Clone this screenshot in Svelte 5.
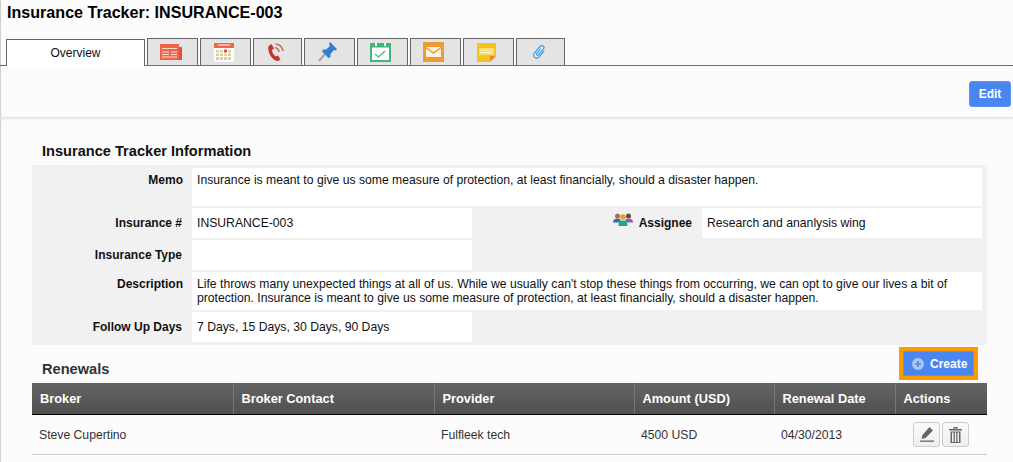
<script lang="ts">
  const tabs = ['news', 'cal', 'phone', 'pin', 'check', 'mail', 'note', 'clip'];
  const cols = [
    { label: 'Broker', width: 201 },
    { label: 'Broker Contact', width: 201 },
    { label: 'Provider', width: 200 },
    { label: 'Amount (USD)', width: 140 },
    { label: 'Renewal Date', width: 121 },
    { label: 'Actions', width: 92 }
  ];
  const renewals = [
    { broker: 'Steve Cupertino', contact: '', provider: 'Fulfleek tech', amount: '4500 USD', date: '04/30/2013' }
  ];
</script>

<div class="page">
  <h1>Insurance Tracker: INSURANCE-003</h1>

  <div class="tabs">
    <div class="tab active">Overview</div>
    {#each tabs as t}
      <div class="tab" class:narrow={t === 'phone' || t === 'clip'}>
        {#if t === 'news'}
          <svg width="22" height="16" viewBox="0 0 22 16">
            <rect x="18" y="3" width="4" height="13" fill="#d9553a" />
            <rect width="19" height="16" fill="#f0644a" />
            <path d="M2 4.500h15M2 8h7M11 8h6M2 10.500h7M11 10.500h6M2 13h15" stroke="#fbd9d0" stroke-width="1.200" />
          </svg>
        {:else if t === 'cal'}
          <svg width="20" height="19" viewBox="0 0 20 19">
            <rect width="20" height="19" fill="#fff" />
            <rect width="20" height="5" fill="#f0644a" />
            <rect x="4" y="1.500" width="12" height="1" fill="#fff" />
            <path d="M2 7h3v2.500H2zM6 7h3v2.500H6zM14 7h3v2.500h-3zM2 10.500h3V13H2zM6 10.500h3V13H6zM10 10.500h3V13h-3zM14 10.500h3V13h-3zM2 14h3v3H2zM6 14h3v3H6zM10 14h3v3h-3zM14 14h3v3h-3z" fill="#dccfa3" />
            <rect x="10" y="6.500" width="3" height="3" fill="#e8503a" />
          </svg>
        {:else if t === 'phone'}
          <svg width="17" height="18" viewBox="0 0 17 18">
            <path d="M.5 3 3.500 1 6 5.500 4 7C4 9.500 5.500 12 8 13.500L10 12.500 12.500 16.500 10 18C4.500 18-1 9.500.5 3Z" fill="#c0392b" />
            <path d="M7 4.500A5 5 0 0 1 11 9M7.500 1A8.500 8.500 0 0 1 15 8" fill="none" stroke="#c86a5c" stroke-width="1.500" />
          </svg>
        {:else if t === 'pin'}
          <svg width="20" height="20" viewBox="0 0 20 20">
            <path d="M1 19 7 12" stroke="#a5a5a5" stroke-width="2" />
            <path d="M12 0 19 7 17.500 8.500 16 8 12.500 12 12.500 15 10.500 16 4 9.500 5 7.500 8 7.500 12 4 11 2Z" fill="#2f80d0" />
          </svg>
        {:else if t === 'check'}
          <svg width="21" height="20" viewBox="0 0 21 20">
            <rect y="1" width="21" height="19" fill="#3cb878" />
            <rect x="2" y="5.500" width="17" height="12.500" fill="#fff" />
            <path d="M5 1h2v3H5zM14 1h2v3h-2z" fill="#fff" />
            <path d="M5 12 8.500 15 15 9" fill="none" stroke="#5cc08a" stroke-width="1.600" />
          </svg>
        {:else if t === 'mail'}
          <svg width="21" height="20" viewBox="0 0 21 20">
            <rect width="21" height="20" fill="#ee9b33" />
            <rect x="3" y="5" width="15" height="10" fill="#fdf3e3" />
            <path d="M3 5.500 10.500 11 18 5.500" fill="none" stroke="#ee9b33" stroke-width="1.500" />
          </svg>
        {:else if t === 'note'}
          <svg width="19" height="19" viewBox="0 0 19 19">
            <path d="M0 0H19V13L13 19H0Z" fill="#f6c21c" />
            <path d="M13 19V13H19Z" fill="#e8892c" />
            <path d="M2 5h15v7H2z" fill="#f9dc78" />
            <path d="M3 7h12M3 9.500h12" stroke="#fdf0b8" stroke-width="1" />
          </svg>
        {:else}
          <svg width="15" height="16" viewBox="0 0 16 16">
            <g transform="rotate(40 8 8)">
              <path d="M11 4V12.500a3.200 3.200 0 0 1-6.400 0V2.800a2.300 2.300 0 0 1 4.600 0V11a1.200 1.200 0 0 1-2.400 0V4.500" fill="none" stroke="#2f9cf0" stroke-width="1.200" />
            </g>
          </svg>
        {/if}
      </div>
    {/each}
  </div>

  <div class="toolbar">
    <button class="btn-edit">Edit</button>
  </div>

  <div class="content">
    <h2>Insurance Tracker Information</h2>
    <div class="form">
      <div class="lbl">Memo</div>
      <div class="val span3">Insurance is meant to give us some measure of protection, at least financially, should a disaster happen.</div>

      <div class="lbl mid">Insurance #</div>
      <div class="val mid">INSURANCE-003</div>
      <div class="lbl mid assignee">
        <svg class="people" width="20" height="13" viewBox="0 0 20 13">
          <circle cx="4.500" cy="3" r="2.500" fill="#b5703a" />
          <circle cx="15.500" cy="3" r="2.500" fill="#6a4a3a" />
          <path d="M0 9.500C0 6.500 2 5.500 4.500 5.500S8 6.500 8 9.500Z" fill="#2f6fb0" />
          <path d="M12 9.500C12 6.500 13 5.500 15.500 5.500S20 6.500 20 9.500Z" fill="#8a5fb0" />
          <circle cx="10" cy="4" r="2.800" fill="#e0a030" />
          <path d="M5.500 13C5.500 8.500 7 7.500 10 7.500S14.500 8.500 14.500 13Z" fill="#2aa58a" />
        </svg>
        <span>Assignee</span>
      </div>
      <div class="val mid">Research and ananlysis wing</div>

      <div class="lbl mid">Insurance Type</div>
      <div class="val"></div>
      <div class="gap"></div>

      <div class="lbl">Description</div>
      <div class="val span3">Life throws many unexpected things at all of us. While we usually can't stop these things from occurring, we can opt to give our lives a bit of protection. Insurance is meant to give us some measure of protection, at least financially, should a disaster happen.</div>

      <div class="lbl mid">Follow Up Days</div>
      <div class="val mid">7 Days, 15 Days, 30 Days, 90 Days</div>
      <div class="gap"></div>
    </div>

    <div class="renewals-head">
      <h2 class="sub">Renewals</h2>
      <div class="highlight">
        <button class="btn-create">
          <svg width="12" height="12" viewBox="0 0 12 12">
            <circle cx="6" cy="6" r="6" fill="#a9c6ee" />
            <path d="M6 3v6M3 6h6" stroke="#4a86e8" stroke-width="1.600" />
          </svg>
          Create
        </button>
      </div>
    </div>

    <table>
      <colgroup>
        {#each cols as c}
          <col style="width: {c.width}px" />
        {/each}
      </colgroup>
      <thead>
        <tr>
          {#each cols as c}
            <th>{c.label}</th>
          {/each}
        </tr>
      </thead>
      <tbody>
        {#each renewals as r}
          <tr>
            <td>{r.broker}</td>
            <td>{r.contact}</td>
            <td>{r.provider}</td>
            <td>{r.amount}</td>
            <td>{r.date}</td>
            <td class="actions">
              <button class="icon-btn" aria-label="Edit">
                <svg width="14" height="15" viewBox="0 0 14 15">
                  <path d="M9.500 0 13 3.500 5.500 11 1.500 12 2.500 8Z" fill="#666" />
                  <rect y="13.500" width="14" height="1.300" fill="#666" />
                </svg>
              </button>
              <button class="icon-btn" aria-label="Delete">
                <svg width="13" height="16" viewBox="0 0 13 16">
                  <path d="M0 2h13v1.500H0zM4.500 0h4v2h-1v-.8h-2V2h-1z" fill="#666" />
                  <path d="M1.500 4.500h10V16h-10zM3 5.500V15h1.500V5.500zM5.800 5.500V15h1.400V5.500zM8.500 5.500V15H10V5.500z" fill="#666" fill-rule="evenodd" />
                </svg>
              </button>
            </td>
          </tr>
        {/each}
      </tbody>
    </table>
  </div>
</div>

<style>
  :global(body) {
    margin: 0;
    background: #fcfcfc;
  }

  .page {
    min-height: 462px;
    box-sizing: border-box;
    font-family: 'Liberation Sans', Arial, sans-serif;
    font-size: 12.2px;
    color: #111;
    box-shadow: inset 2px 0 1px -1px #ccc;
    overflow: hidden;
  }

  h1 {
    margin: 0;
    padding: 3px 0 0 7px;
    height: 35px;
    box-sizing: border-box;
    font-size: 16.1px;
    line-height: 19px;
    color: #000;
  }

  .tabs {
    display: flex;
    align-items: flex-end;
    gap: 2px;
    padding: 3px 0 0 6px;
    height: 31px;
    box-sizing: border-box;
    border-bottom: 1px solid #666;
  }

  .tab {
    width: 51px;
    height: 27px;
    padding-right: 4px;
    box-sizing: border-box;
    background: #e4e4e4;
    border: 1px solid #666;
    border-bottom: none;
    display: flex;
    align-items: center;
    justify-content: center;
  }

  .tab.narrow {
    width: 49px;
    padding-right: 2px;
  }

  .tab.active {
    width: 139px;
    height: 27px;
    padding-right: 0;
    margin-bottom: -1px;
    background: #fff;
    color: #111;
    font-size: 12px;
    position: relative;
  }

  .toolbar {
    height: 52px;
    box-sizing: border-box;
    display: flex;
    justify-content: flex-end;
    align-items: flex-start;
    padding: 15px 2px 0 0;
    border-bottom: 1px solid #e4e4e4;
    box-shadow: 0 1px 2px #e6e6e6;
  }

  .btn-edit {
    width: 42px;
    height: 26px;
    padding: 0;
    background: #4a86f0;
    border: 1px solid #5b94f2;
    border-radius: 3px;
    color: #fff;
    font: bold 12px 'Liberation Sans', Arial, sans-serif;
  }

  .content {
    padding: 24px 26px 0 32px;
  }

  h2 {
    margin: 0;
    padding-left: 10px;
    font-size: 14.6px;
    line-height: 18px;
    height: 23px;
    color: #111;
  }

  .form {
    display: grid;
    grid-template-columns: 160px 280px 230px 280px;
    grid-template-rows: 38px 30px 30px 38px 30px;
    row-gap: 2px;
    padding: 3px 5px 3px 0;
    background: #f1f1f1;
  }

  .lbl {
    padding: 5px 9px 0 0;
    text-align: right;
    font-size: 12px;
    font-weight: bold;
    line-height: 14px;
  }

  .lbl.mid {
    padding-top: 8px;
    padding-right: 10px;
  }

  .lbl.assignee {
    display: flex;
    justify-content: flex-end;
    align-items: flex-start;
    gap: 6px;
  }

  .val {
    padding: 5px 5px 0;
    background: #fff;
    line-height: 14px;
  }

  .val.mid {
    padding-top: 8px;
  }

  .span3 {
    grid-column: span 3;
  }

  .gap {
    grid-column: span 2;
  }

  .people {
    margin-top: -3px;
  }

  .renewals-head {
    display: flex;
    justify-content: space-between;
    height: 38px;
    padding-top: 2px;
    box-sizing: border-box;
  }

  .sub {
    padding-top: 13px;
    color: #333;
  }

  .highlight {
    margin-right: 9px;
    height: 33px;
    box-sizing: border-box;
    border: 4px solid #f90;
  }

  .btn-create {
    display: flex;
    align-items: center;
    gap: 6px;
    width: 71px;
    height: 25px;
    padding: 0 0 0 8px;
    background: #4a86f0;
    border: 1px solid #5b94f2;
    color: #fff;
    font: bold 12px 'Liberation Sans', Arial, sans-serif;
  }

  table {
    width: 955px;
    table-layout: fixed;
    border-collapse: collapse;
  }

  th {
    height: 31px;
    padding: 0 8px;
    text-align: left;
    color: #fff;
    font-size: 12.8px;
    background: linear-gradient(#646464, #505050);
    border-right: 1px solid #777;
    border-bottom: 1px solid #000;
  }

  th:last-child {
    border-right: none;
  }

  td {
    height: 39px;
    padding: 0 7px;
    color: #333;
    border-bottom: 1px solid #ccc;
  }

  .actions {
    padding: 0 0 0 18px;
    white-space: nowrap;
  }

  .icon-btn {
    width: 27px;
    height: 25px;
    margin-right: -1px;
    padding: 0;
    vertical-align: middle;
    background: linear-gradient(#fbfbfb, #eee);
    border: 1px solid #ccc;
    border-radius: 3px;
    display: inline-flex;
    align-items: center;
    justify-content: center;
  }
</style>
